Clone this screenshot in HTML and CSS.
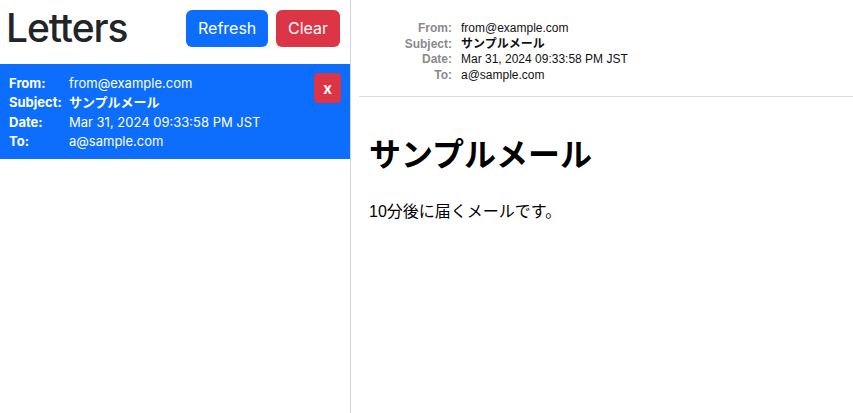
FILE: index.html
```html
<!DOCTYPE html>
<html lang="ja">
<head>
<meta charset="utf-8">
<title>Letters</title>
<link rel="stylesheet" href="styles.css">
</head>
<body>
<div class="app">
  <aside class="sidebar">
    <div class="sidebar-header">
      <h1 class="title">Letters</h1>
      <div class="actions">
        <button class="btn btn-primary">Refresh</button>
        <button class="btn btn-danger">Clear</button>
      </div>
    </div>
    <div class="letter-item">
      <div class="letter-grid">
        <span class="lbl">From:</span><span class="val">from@example.com</span>
        <span class="lbl">Subject:</span><span class="val subj">サンプルメール</span>
        <span class="lbl">Date:</span><span class="val">Mar 31, 2024 09:33:58 PM JST</span>
        <span class="lbl">To:</span><span class="val">a@sample.com</span>
      </div>
      <button class="btn-x">x</button>
    </div>
  </aside>
  <main class="viewer">
    <div class="mail-header">
      <span class="h-lbl">From:</span><span class="h-val">from@example.com</span>
      <span class="h-lbl">Subject:</span><span class="h-val subj">サンプルメール</span>
      <span class="h-lbl">Date:</span><span class="h-val">Mar 31, 2024 09:33:58 PM JST</span>
      <span class="h-lbl">To:</span><span class="h-val">a@sample.com</span>
    </div>
    <div class="mail-body">
      <h1 class="mail-title">サンプルメール</h1>
      <p class="mail-text">10分後に届くメールです。</p>
    </div>
  </main>
</div>
</body>
</html>
```
FILE: styles.css
```css
* { box-sizing: border-box; }
html, body { margin: 0; padding: 0; height: 100%; }
body {
  font-family: Inter, "Noto Sans CJK JP", sans-serif;
  color: #212529;
  background: #fff;
}
.app {
  display: flex;
  height: 100vh;
}
.sidebar {
  width: 351px;
  flex: 0 0 351px;
  border-right: 1px solid #d4d4d4;
}
.sidebar-header {
  height: 64px;
  display: flex;
  justify-content: space-between;
  align-items: flex-start;
  padding: 0 10px 0 6px;
}
.title {
  margin: 0;
  font-size: 39px;
  font-weight: 500;
  line-height: 50px;
  letter-spacing: -1.1px;
  padding-top: 3px;
}
.actions {
  display: flex;
  gap: 8px;
  margin-top: 10px;
}
.btn {
  height: 37px;
  border: none;
  border-radius: 6px;
  color: #fff;
  font-family: Inter, sans-serif;
  font-size: 16px;
  padding: 0 12px;
  line-height: 37px;
}
.btn-primary { background: #0d6efd; width: 82px; }
.btn-danger { background: #dc3545; width: 64px; }
.letter-item {
  position: relative;
  background: #0d6efd;
  color: #fff;
  padding: 10px 9px 8px;
}
.letter-grid {
  display: grid;
  grid-template-columns: 60px auto;
  font-size: 13px;
  line-height: 19.3px;
}
.lbl { font-weight: 700; }
.val.subj { font-weight: 700; }
.btn-x {
  position: absolute;
  top: 9px;
  right: 9px;
  width: 27px;
  height: 30px;
  border: none;
  border-radius: 4px;
  background: #dc3545;
  color: #fff;
  font-family: Inter, sans-serif;
  font-weight: 700;
  font-size: 15px;
  padding: 0;
}
.viewer {
  flex: 1;
  min-width: 0;
}
.mail-header {
  margin-left: 8px;
  padding: 21px 0 13px;
  border-bottom: 1px solid #dcdcdc;
  display: grid;
  grid-template-columns: 93px auto;
  column-gap: 9px;
  font-family: "Liberation Sans", "Noto Sans CJK JP", sans-serif;
  font-size: 12px;
  line-height: 15.5px;
}
.h-lbl {
  text-align: right;
  font-weight: 700;
  color: #8a8a8a;
}
.h-val { color: #111; }
.h-val.subj { font-weight: 700; }
.mail-body {
  padding: 8px 18px;
  font-family: "Liberation Sans", "Noto Sans CJK JP", sans-serif;
  color: #000;
}
.mail-title {
  font-size: 32px;
  font-weight: 700;
  margin: 24px 0 23px;
}
.mail-text {
  font-size: 16px;
  margin: 0;
}
```
